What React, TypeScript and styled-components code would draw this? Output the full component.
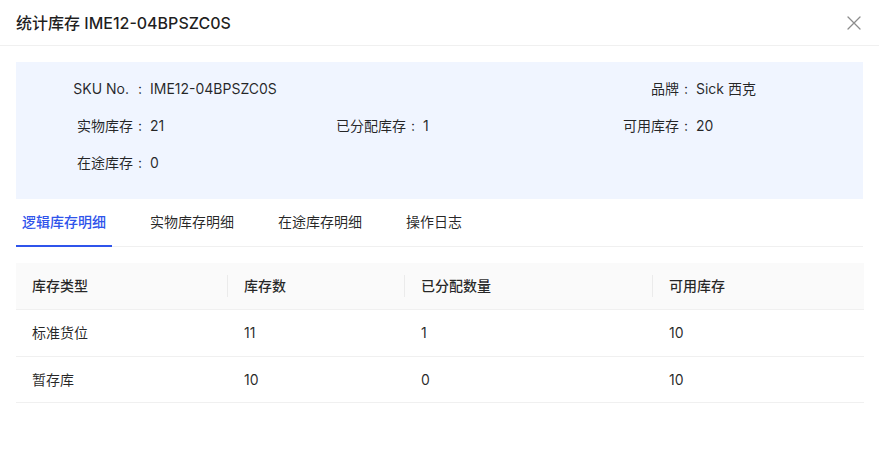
import React from 'react';
import styled, { createGlobalStyle } from 'styled-components';

const GlobalStyle = createGlobalStyle`
	html, body {
		margin: 0;
		padding: 0;
		background: #fff;
	}
	body {
		font-family: Inter, "Noto Sans CJK SC", sans-serif;
		font-size: 14px;
		color: rgba(0, 0, 0, 0.85);
		-webkit-font-smoothing: antialiased;
	}
`;

const ModalStyle = styled.div`
	width: 879px;
	min-height: 462px;
	background: #fff;
`;

const HeaderStyle = styled.div`
	display: flex;
	align-items: center;
	justify-content: space-between;
	height: 45px;
	padding: 0 16px;
	border-bottom: 1px solid #f0f0f0;
`;

const TitleStyle = styled.div`
	font-size: 16px;
	font-weight: 500;
	line-height: 22px;
	color: rgba(0, 0, 0, 0.88);
`;

const CloseStyle = styled.button`
	display: flex;
	align-items: center;
	justify-content: center;
	width: 18px;
	height: 18px;
	padding: 0;
	border: none;
	background: transparent;
	color: rgba(0, 0, 0, 0.45);
	cursor: pointer;
`;

const BodyStyle = styled.div`
	padding: 16px 16px 0;
`;

const InfoPanelStyle = styled.div`
	display: grid;
	grid-template-columns: repeat(3, 273px);
	grid-auto-rows: 37px;
	padding: 8px 14px 18px;
	background: #f0f5ff;
`;

const InfoItemStyle = styled.div<{ $col: number }>`
	grid-column: ${props => props.$col};
	display: flex;
	align-items: center;
	line-height: 22px;
`;

const InfoLabelStyle = styled.span`
	width: 120px;
	text-align: right;
	color: rgba(0, 0, 0, 0.85);
	white-space: pre;
`;

const ColonStyle = styled.span`
	margin: 0 8px 0 5px;
`;

const InfoValueStyle = styled.span`
	color: rgba(0, 0, 0, 0.85);
`;

const TabNavStyle = styled.div`
	display: flex;
	gap: 32px;
	border-bottom: 1px solid #f0f0f0;
`;

const TabStyle = styled.div<{ $active?: boolean }>`
	position: relative;
	padding: 12px 6px 13px;
	line-height: 22px;
	font-size: 14px;
	font-weight: ${props => props.$active ? 500 : 400};
	color: ${props => props.$active ? '#2f54eb' : 'rgba(0, 0, 0, 0.85)'};
	cursor: pointer;

	&::after {
		content: '';
		display: ${props => props.$active ? 'block' : 'none'};
		position: absolute;
		left: 0;
		right: 0;
		bottom: -1px;
		height: 2px;
		background: #2f54eb;
	}
`;

const TableStyle = styled.table`
	width: 848px;
	margin-top: 16px;
	border-collapse: collapse;
	table-layout: fixed;
`;

const ThStyle = styled.th<{ $last?: boolean }>`
	position: relative;
	padding: 12px 16px;
	line-height: 22px;
	text-align: left;
	font-weight: 500;
	color: rgba(0, 0, 0, 0.85);
	background: #fafafa;
	border-bottom: 1px solid #f0f0f0;

	&::before {
		content: '';
		display: ${props => props.$last ? 'none' : 'block'};
		position: absolute;
		top: 50%;
		right: 0;
		width: 1px;
		height: 22px;
		transform: translateY(-50%);
		background: rgba(0, 0, 0, 0.06);
	}
`;

const TdStyle = styled.td`
	padding: 12px 16px 11.5px;
	line-height: 22px;
	color: rgba(0, 0, 0, 0.85);
	border-bottom: 1px solid #f0f0f0;
`;

const CloseIcon = () => (
	<svg width="14" height="14" viewBox="0 0 14 14" fill="none">
		<path d="M1 1L13 13M13 1L1 13" stroke="currentColor" strokeWidth="1.3" strokeLinecap="round" />
	</svg>
);

const infoItems = [
	{ row: 1, col: 1, label: 'SKU No. ', value: 'IME12-04BPSZC0S' },
	{ row: 1, col: 3, label: '品牌', value: 'Sick 西克' },
	{ row: 2, col: 1, label: '实物库存', value: '21' },
	{ row: 2, col: 2, label: '已分配库存', value: '1' },
	{ row: 2, col: 3, label: '可用库存', value: '20' },
	{ row: 3, col: 1, label: '在途库存', value: '0' },
];

const tabs = ['逻辑库存明细', '实物库存明细', '在途库存明细', '操作日志'];

const columns = [
	{ title: '库存类型', width: 212 },
	{ title: '库存数', width: 177 },
	{ title: '已分配数量', width: 248 },
	{ title: '可用库存', width: 211 },
];

const rows = [
	['标准货位', '11', '1', '10'],
	['暂存库', '10', '0', '10'],
];

const App = () => {
	const [activeTab, setActiveTab] = React.useState(0);

	return (
		<ModalStyle>
			<GlobalStyle />
			<HeaderStyle>
				<TitleStyle>统计库存 IME12-04BPSZC0S</TitleStyle>
				<CloseStyle aria-label="close">
					<CloseIcon />
				</CloseStyle>
			</HeaderStyle>

			<BodyStyle>
				<InfoPanelStyle>
					{infoItems.map((item, index) => (
						<InfoItemStyle key={index} $col={item.col} style={{ gridRow: item.row }}>
							<InfoLabelStyle>{item.label}<ColonStyle>:</ColonStyle></InfoLabelStyle>
							<InfoValueStyle>{item.value}</InfoValueStyle>
						</InfoItemStyle>
					))}
				</InfoPanelStyle>

				<TabNavStyle>
					{tabs.map((tab, index) => (
						<TabStyle key={tab} $active={index === activeTab} onClick={() => setActiveTab(index)}>
							{tab}
						</TabStyle>
					))}
				</TabNavStyle>

				<TableStyle>
					<colgroup>
						{columns.map(col => <col key={col.title} style={{ width: col.width }} />)}
					</colgroup>
					<thead>
						<tr>
							{columns.map((col, index) => (
								<ThStyle key={col.title} $last={index === columns.length - 1}>{col.title}</ThStyle>
							))}
						</tr>
					</thead>
					<tbody>
						{rows.map((row, index) => (
							<tr key={index}>
								{row.map((cell, i) => <TdStyle key={i}>{cell}</TdStyle>)}
							</tr>
						))}
					</tbody>
				</TableStyle>
			</BodyStyle>
		</ModalStyle>
	);
}

export default App;
